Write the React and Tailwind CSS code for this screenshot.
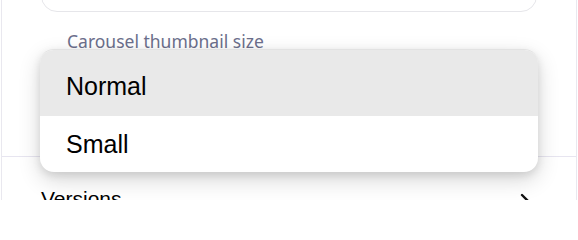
import React from "react";

export default function App() {
  return (
    <div className="relative w-[578px] h-[200px] overflow-hidden bg-white" style={{ fontFamily: '"Liberation Sans", Arial, sans-serif' }}>
      <div className="ml-[1px] w-[576px] h-[200px] border-x border-x-[#e9e8ef] flex flex-col">
        <div className="px-[39px]">
          <div className="-mt-[28px] h-[40px] rounded-2xl border border-[#e6e6ea]" />
          <div className="relative mt-[37px] h-[56px] rounded-2xl border border-[#e4e4e8]">
            <span
              className="absolute -top-[19px] left-[20px] bg-white px-[5px] text-[17.5px] leading-[20px] text-[#6c6f8c]"
              style={{ fontFamily: '"Noto Sans", "Open Sans", sans-serif' }}
            >
              Carousel thumbnail size
            </span>
          </div>
        </div>
        <div className="mt-[51px] border-t border-[#e7e5f0]" />
        <div className="flex items-center justify-between px-[39px] pt-[29px]">
          <span className="text-[21px] leading-[26px] text-black">Versions</span>
          <svg width="14" height="20" viewBox="0 0 14 20" className="mr-[4px] mt-[6px]">
            <path d="M3 3 L10 10 L3 17" stroke="#111" strokeWidth="2.4" fill="none" strokeLinecap="round" strokeLinejoin="round" />
          </svg>
        </div>
      </div>

      <div className="absolute left-[40px] top-[49px] w-[498px] h-[123px] rounded-[14px] bg-white overflow-hidden border-t border-[#e2e2e2] shadow-[0_8px_22px_rgba(0,0,0,0.16),0_3px_8px_rgba(0,0,0,0.1)]">
        <div className="h-[66px] pt-[8px] bg-[#e9e9e9] flex items-center px-[26px] text-[25px] text-black">
          Normal
        </div>
        <div className="h-[57px] flex items-center px-[26px] text-[25px] text-black">
          Small
        </div>
      </div>
    </div>
  );
}
